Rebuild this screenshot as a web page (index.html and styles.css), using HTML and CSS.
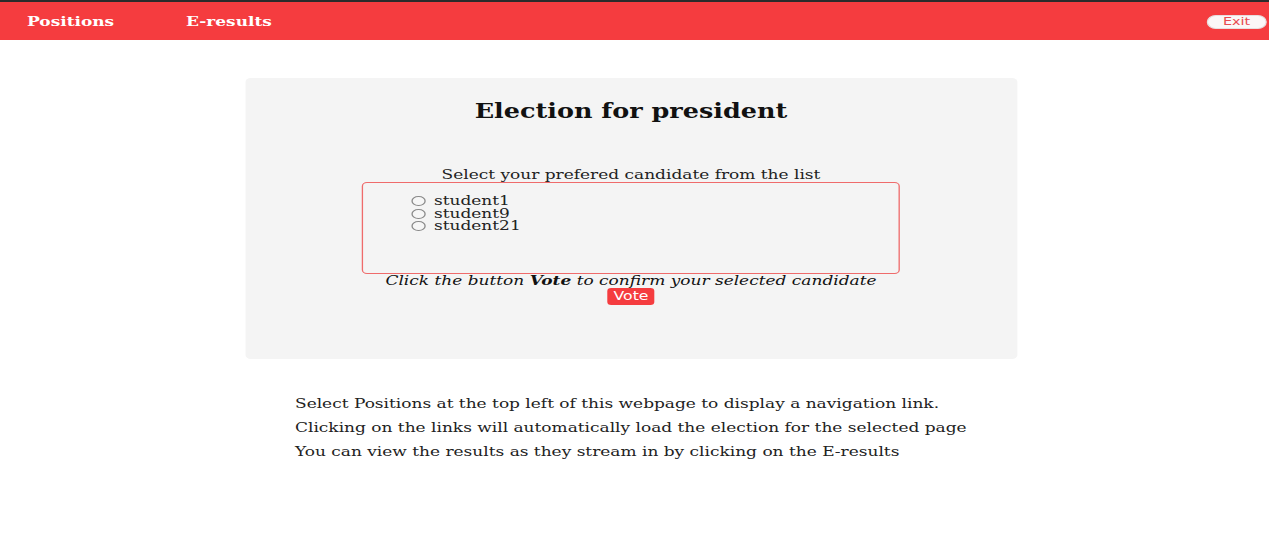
FILE: index.html
```html
<!DOCTYPE html>
<html>
<head>
<meta charset="utf-8">
<title>Election</title>
<link rel="stylesheet" href="styles.css">
</head>
<body>
<div class="page">
<header class="topbar">
  <nav class="nav-links">
    <a class="nav-link" href="#">Positions</a>
    <a class="nav-link" href="#">E-results</a>
  </nav>
  <button class="exit-btn">Exit</button>
</header>
<main class="main">
  <section class="card">
    <h1 class="card-title">Election for president</h1>
    <p class="instruction">Select your prefered candidate from the list</p>
    <div class="candidates">
      <label class="candidate"><input type="radio" name="cand" class="radio">student1</label>
      <label class="candidate"><input type="radio" name="cand" class="radio">student9</label>
      <label class="candidate"><input type="radio" name="cand" class="radio">student21</label>
    </div>
    <p class="confirm">Click the button <b>Vote</b> to confirm your selected candidate</p>
    <button class="vote-btn">Vote</button>
  </section>
  <section class="help">
    <p class="help-line">Select Positions at the top left of this webpage to display a navigation link.</p>
    <p class="help-line">Clicking on the links will automatically load the election for the selected page</p>
    <p class="help-line">You can view the results as they stream in by clicking on the E-results</p>
  </section>
</main>
</div>
</body>
</html>
```

FILE: styles.css
```css
html, body {
  margin: 0;
  padding: 0;
  background: #ffffff;
  overflow: hidden;
}
.page {
  width: 971.7px;
  transform: scaleX(1.306);
  transform-origin: 0 0;
  font-family: "DejaVu Serif", serif;
  font-size: 13px;
  color: #222;
}
.topbar {
  display: flex;
  align-items: center;
  justify-content: space-between;
  height: 38px;
  background: #f53c3f;
  border-top: 2px solid #2b2b2b;
}
.nav-links {
  display: flex;
  gap: 55px;
  padding-left: 20.7px;
}
.nav-link {
  color: #fff;
  text-decoration: none;
  font-weight: bold;
  font-size: 13px;
}
.exit-btn {
  margin-right: 1.5px;
  margin-top: 1px;
  width: 46.7px;
  height: 14px;
  padding: 0;
  border: 1px solid #e6dede;
  border-radius: 7px;
  background: #fbf7f7;
  color: #e84a4f;
  font-family: "DejaVu Sans", sans-serif;
  font-size: 11px;
  line-height: 12px;
}
.main {
  padding-top: 38px;
}
.card {
  width: 591.1px;
  height: 281px;
  box-sizing: border-box;
  margin-left: 187.6px;
  background: #f4f4f4;
  border-radius: 4px;
  display: flex;
  flex-direction: column;
  align-items: center;
  padding-top: 22px;
}
.card-title {
  margin: 0;
  font-size: 19.5px;
  font-weight: bold;
  color: #111;
}
.instruction {
  margin: 45px 0 0;
  line-height: 14px;
}
.candidates {
  width: 411.9px;
  height: 92px;
  box-sizing: border-box;
  border: 1px solid #ef6b6b;
  border-radius: 4px;
  padding: 12px 0 0 37.3px;
  display: flex;
  flex-direction: column;
}
.candidate {
  display: flex;
  align-items: center;
  height: 12.5px;
  line-height: 12px;
}
.radio {
  appearance: none;
  -webkit-appearance: none;
  box-sizing: border-box;
  margin: 0 6.3px 0 0;
  width: 10.5px;
  height: 10px;
  border: 1.5px solid #8a8a8a;
  border-radius: 50%;
  background: #f6f6f6;
}
.confirm {
  margin: 0;
  font-style: italic;
  line-height: 14px;
  color: #111;
}
.vote-btn {
  width: 36px;
  height: 17px;
  padding: 0;
  border: none;
  border-radius: 3px;
  background: #f53c3f;
  color: #fff;
  font-family: "DejaVu Sans", sans-serif;
  font-size: 12px;
  line-height: 17px;
}
.help {
  padding-left: 225.9px;
  padding-top: 33px;
}
.help-line {
  margin: 0;
  line-height: 24px;
}
```
